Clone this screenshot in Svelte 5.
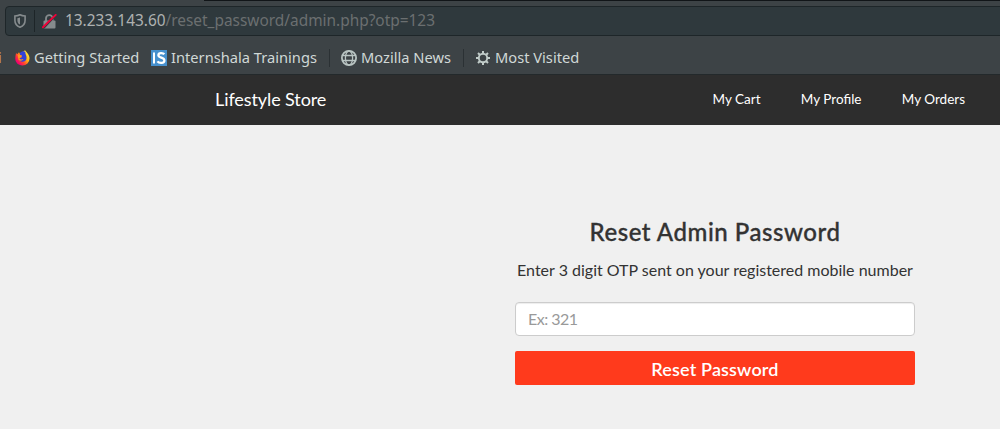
<script>
  let otp = $state('');
  const links = ['My Cart', 'My Profile', 'My Orders'];
</script>

<div class="screen">
  <header class="chrome">
    <div class="tab-edge"></div>
    <div class="address">
      <svg class="shield" width="12" height="14" viewBox="0 0 12 14">
        <path d="M6 .8C4.6 1.6 3 2 .9 2v4.2c0 3.4 1.8 5.8 5.1 7 3.3-1.2 5.1-3.6 5.1-7V2C9 2 7.400 1.600 6 .8Z" fill="none" stroke="#858b8d" stroke-width="1.6" />
        <path d="M6 3.600 3.400 4.200v2.200c0 2 .9 3.300 2.600 4.200Z" fill="#858b8d" />
      </svg>
      <span class="divider"></span>
      <svg class="lock" width="15" height="15" viewBox="0 0 15 15">
        <path d="M4 7V4.500a3.300 3.300 0 0 1 6.600 0V7" fill="none" stroke="#858b8d" stroke-width="1.8" />
        <rect x="1.500" y="6.500" width="12" height="8" rx="1" fill="#858b8d" />
        <path d="m.5 13.300 12.500-13 1.600 1.500L2.500 14.500Z" fill="#303a3d" />
        <path d="M.9 13.300 13.700.9" stroke="#f00038" stroke-width="1.9" stroke-linecap="round" />
      </svg>
      <span class="url"><b>13.233.143.60</b>/reset_password/admin.php?otp=123</span>
    </div>
    <div class="bookmarks">
      <span class="cut">i</span>
      <svg class="fox" width="15" height="16" viewBox="0 0 15 16">
        <defs>
          <linearGradient id="flame" x1=".9" y1=".1" x2=".15" y2=".8">
            <stop offset="0" stop-color="#fff13d" />
            <stop offset=".4" stop-color="#ffb414" />
            <stop offset=".7" stop-color="#ff462d" />
            <stop offset="1" stop-color="#f4006f" />
          </linearGradient>
        </defs>
        <path d="M1 3.200 2.500 4 4 2.300 5 4l5-3.700c.7 1.400 4.500 3.800 4.500 8A7 7 0 0 1 7.400 15.500C3.200 15.500.3 12.400.3 8.600c0-2 .3-3.700.7-5.400Z" fill="url(#flame)" />
        <path d="M5 3c1.600-2 4.200-2 5.300-.9C10 4.500 12 5.600 11.500 8.500c-.4 2.200-2.200 3.300-4.200 3.200C5.400 11.500 4 10 4.100 8.400L6.500 7.600 7 5.700 5 5Z" fill="#3142d7" />
        <path d="M2.500 4.500 6.800 5.500 5.800 7 4.400 8.500c1 .9 2.200 1.200 4 .5-.5 1.500-3.200 2.700-4.900.7Z" fill="#ff9720" />
      </svg>
      <span class="label getting">Getting Started</span>
      <svg class="is" width="16" height="16" viewBox="0 0 16 16">
        <rect width="16" height="16" fill="#4690cd" />
        <path d="M3 2.500v11" stroke="#fff" stroke-width="2" />
        <path d="M13.300 4.300C12.200 2.800 7.500 2.300 7.400 5.200c0 3 6 2 6 5.200 0 3.300-5.400 3-7 1" fill="none" stroke="#fff" stroke-width="2.300" />
      </svg>
      <span class="label trainings">Internshala Trainings</span>
      <span class="split"></span>
      <svg class="globe" width="16" height="16" viewBox="0 0 16 16" fill="none" stroke="#b9c4c2">
        <circle cx="8" cy="8" r="7.100" stroke-width="1.800" />
        <ellipse cx="8" cy="8" rx="3.600" ry="7" stroke-width="1.300" />
        <path d="M1.500 5.500h13M1.500 10.500h13" stroke-width="1.300" />
      </svg>
      <span class="label news">Mozilla News</span>
      <span class="split"></span>
      <svg class="gear" width="14" height="14" viewBox="0 0 14 14" fill="none" stroke="#c1ccc9">
        <circle cx="7" cy="7" r="4.200" stroke-width="1.900" />
        <path d="M7 0v3M7 11v3M0 7h3M11 7h3M2 2l2 2M10 10l2 2M2 12l2-2M10 4l2-2" stroke-width="2" />
      </svg>
      <span class="label visited">Most Visited</span>
    </div>
  </header>

  <nav>
    <a class="brand" href="#home">Lifestyle Store</a>
    <div class="links">
      {#each links as link}
        <a href="#account">{link}</a>
      {/each}
    </div>
  </nav>

  <main>
    <form onsubmit={(event) => event.preventDefault()}>
      <h1><span>Reset Admin Password</span></h1>
      <p><span>Enter 3 digit OTP sent on your registered mobile number</span></p>
      <input bind:value={otp} placeholder="Ex: 321" aria-label="OTP" />
      <button><span>Reset Password</span></button>
    </form>
  </main>
</div>

<style>
  :global(body) { margin: 0; }
  .screen { width: 1000px; height: 429px; overflow: hidden; background: #f0f0f0; font-family: Lato, sans-serif; }
  .screen, .screen * { box-sizing: border-box; }
  svg { display: block; flex: none; }
  span, a { white-space: nowrap; }
  .chrome { height: 75px; background: #3d4346; border-bottom: 1px solid #23292b; font-family: "Noto Sans", sans-serif; font-size: 14.667px; }
  .tab-edge { height: 1px; margin-left: 204px; background: #111518; }
  .address { display: flex; align-items: center; height: 30px; margin: 5px -10px 0 5px; padding-left: 9px; background: #2f393d; border: 1px solid #1e2629; border-radius: 4px; }
  .shield { margin-left: -1px; }
  .divider { width: 1px; height: 22px; margin-left: 8px; background: #1d2528; }
  .lock { margin-left: 7px; }
  .url { margin-left: 8px; color: #6b6f70; font-size: 15.420px; line-height: 20px; }
  .url b { font-weight: 400; color: #aeb1b1; }
  .bookmarks { display: flex; align-items: center; height: 38px; padding-top: 6px; color: #d0d8d6; }
  .cut { width: 3px; color: #c49a5c; margin: -2px 0 0 -2px; }
  .fox { margin-left: 14px; }
  .label { flex: none; margin-top: -2px; line-height: 20px; }
  .getting { width: 105px; margin-left: 4px; }
  .is { margin-left: 12px; }
  .trainings { width: 146px; margin-left: 4px; }
  .split { width: 1px; height: 18px; margin-left: 12px; background: #2b3134; }
  .globe { margin-left: 11px; }
  .news { width: 90px; margin-left: 4px; }
  .gear { margin-left: 12px; }
  .visited { margin-left: 5px; }
  nav { display: flex; justify-content: space-between; height: 50px; padding: 0 35px 0 215px; background: #2d2d2d; color: #fff; }
  a { color: inherit; text-decoration: none; }
  .brand { font-size: 18px; line-height: 49px; letter-spacing: -.09px; }
  .links { display: flex; gap: 40.300px; font-size: 13.500px; line-height: 49px; }
  main { padding: 90px 0 0 515px; }
  form { width: 400px; text-align: center; color: #333; }
  h1 { margin: 0; font-size: 24px; font-weight: 500; line-height: 34px; letter-spacing: .54px; -webkit-text-stroke: .35px #333; }
  p { margin: 11px 0 0; font-size: 16px; line-height: 20px; }
  input { display: block; width: 400px; height: 34px; margin: 22px 0 0; padding: 0 12px 2px; border: 1px solid #ccc; border-radius: 4px; background: #fff; box-shadow: inset 0 1px 1px rgba(0, 0, 0, .075); font: 16px Lato, sans-serif; letter-spacing: -.5px; outline: 0; }
  input::placeholder { color: #999; opacity: 1; }
  button { display: block; width: 400px; height: 34px; margin: 15px 0 0; padding: 1px 0 0; border: 0; border-radius: 2px; background: #ff3a1c; color: #fff; font: 600 18px/32px Lato, sans-serif; letter-spacing: .15px; }
</style>
